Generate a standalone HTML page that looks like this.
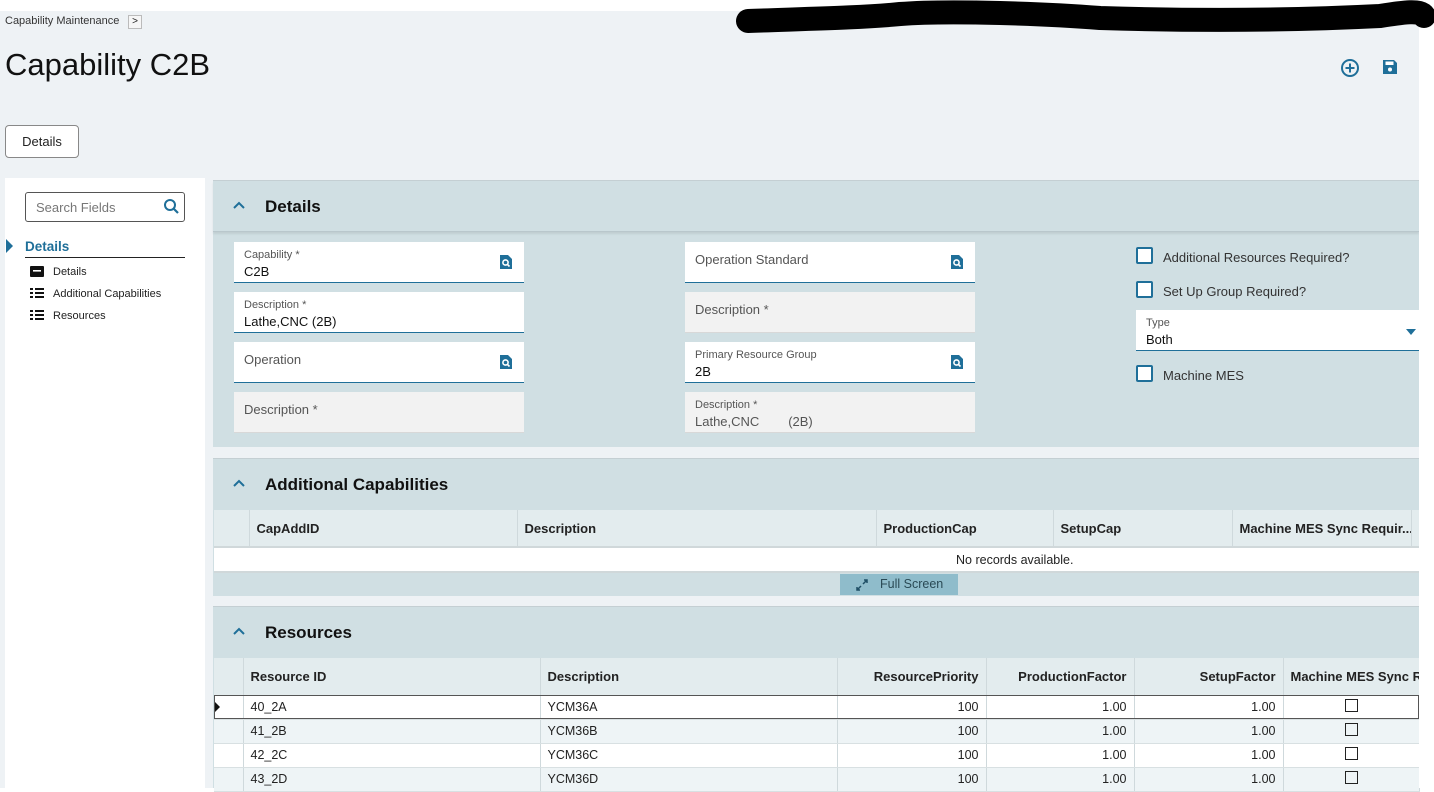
<!DOCTYPE html>
<html><head><meta charset="utf-8"><style>
*{box-sizing:border-box;margin:0;padding:0}
body{width:1434px;height:788px;overflow:hidden;background:#fff;font-family:"Liberation Sans",sans-serif;color:#222;position:relative}
.a{position:absolute}
.bg{left:0;top:11px;width:1419px;height:777px;background:#eef2f5}
.fld{position:absolute;background:#fff;border-bottom:1.5px solid #1f6f99;height:41px}
.fld.g{background:#f2f2f2;border-bottom:1px solid #d8d8d8}
.lbl{position:absolute;left:10px;top:7px;font-size:11px;color:#555}
.lbl.big{font-size:13px;top:10px}
.val{position:absolute;left:10px;top:22px;font-size:13px;color:#111}
.lk{position:absolute;right:12px;top:13px}
.sec{position:absolute;left:213px;width:1206px;background:#d0dfe3;border-top:1px solid #c4cfd3}
.sh{position:absolute;left:0;top:0;width:100%;height:51px;border-bottom:1px solid #b9c7cc;box-shadow:0 2px 2px rgba(0,0,0,.08)}
.st{position:absolute;left:52px;top:16px;font-size:17px;font-weight:bold;color:#111}
.chev{position:absolute;left:20px;top:20px}
.cb{position:absolute;width:17px;height:17px;border:2px solid #1f6f99;background:#fff;border-radius:2px}
.cbl{position:absolute;font-size:13px;color:#333}
table{border-collapse:collapse;position:absolute;table-layout:fixed}
th{background:#e3ecee;font-size:13px;text-align:left;font-weight:bold;height:37px;border-right:1px solid #cfd9dc;padding:0 7px;white-space:nowrap;overflow:hidden;color:#222}
td{font-size:12.5px;height:24px;border-right:1px solid #cfd9dc;border-bottom:1px solid #d8e0e2;padding:0 7px;white-space:nowrap}
.r{text-align:right}
.ck{display:inline-block;width:13px;height:13px;border:1.5px solid #222}
</style></head><body>
<div class="a bg"></div>
<div class="a" style="left:5px;top:15px;font-size:11px;color:#333">Capability Maintenance</div>
<div class="a" style="left:128px;top:15px;width:14px;height:14px;border:1px solid #bbb;background:#f6f6f6;font-size:10px;text-align:center;line-height:12px">&gt;</div>
<div class="a" style="left:5px;top:47px;font-size:31px;color:#111">Capability C2B</div>
<svg class="a" style="left:1340px;top:58px" width="20" height="20" viewBox="0 0 20 20"><circle cx="10" cy="10" r="8" fill="none" stroke="#1f6f99" stroke-width="2"/><path d="M10 5.5v9M5.5 10h9" stroke="#1f6f99" stroke-width="2"/></svg>
<svg class="a" style="left:1382px;top:59px" width="16" height="16" viewBox="0 0 16 16"><path d="M1 1h11l3 3v11H1z" fill="#1f6f99"/><rect x="3.5" y="2.5" width="8" height="3.5" fill="#fff"/><circle cx="8" cy="10.5" r="2" fill="#fff"/></svg>
<div class="a" style="left:5px;top:125px;width:74px;height:33px;border:1px solid #888;border-radius:4px;background:#fff;font-size:13px;text-align:center;line-height:31px">Details</div>

<div class="a" style="left:5px;top:178px;width:200px;height:610px;background:#fff"></div>
<div class="a" style="left:25px;top:192px;width:160px;height:30px;border:1px solid #555;border-radius:3px;background:#fff"><span class="a" style="left:10px;top:7px;font-size:13px;color:#777">Search Fields</span>
<svg class="a" style="left:137px;top:5px" width="17" height="17" viewBox="0 0 17 17"><circle cx="7" cy="7" r="5" fill="none" stroke="#1f6f99" stroke-width="2"/><path d="M10.5 10.5L15 15" stroke="#1f6f99" stroke-width="2.2"/></svg></div>
<svg class="a" style="left:6px;top:239px" width="7" height="14"><path d="M0 0L7 7L0 14z" fill="#1f6f99"/></svg>
<div class="a" style="left:25px;top:239px;font-size:13.5px;font-weight:bold;color:#1f6f99">Details</div>
<div class="a" style="left:25px;top:257px;width:160px;border-top:1px solid #222"></div>
<svg class="a" style="left:30px;top:266px" width="14" height="11"><rect width="14" height="11" rx="1" fill="#111"/><rect x="3" y="4" width="8" height="1.6" fill="#fff"/></svg>
<div class="a" style="left:53px;top:266px;font-size:11px">Details</div>
<svg class="a" style="left:30px;top:288px" width="14" height="11"><path d="M0 1h3M0 5h3M0 9h3M5 1h9M5 5h9M5 9h9" stroke="#111" stroke-width="2"/></svg>
<div class="a" style="left:53px;top:288px;font-size:11px">Additional Capabilities</div>
<svg class="a" style="left:30px;top:310px" width="14" height="11"><path d="M0 1h3M0 5h3M0 9h3M5 1h9M5 5h9M5 9h9" stroke="#111" stroke-width="2"/></svg>
<div class="a" style="left:53px;top:310px;font-size:11px">Resources</div>

<div class="sec" style="top:180px;height:267px">
<div class="sh"><svg class="chev" width="12" height="8"><path d="M1 7L6 2L11 7" stroke="#1f6f99" stroke-width="2" fill="none"/></svg><div class="st">Details</div></div>
</div>
<div class="fld" style="left:234px;top:242px;width:290px"><div class="lbl">Capability *</div><div class="val">C2B</div><svg class="lk" width="12" height="14" viewBox="0 0 12 14"><path d="M0 0h8l4 4v10H0z" fill="#1f6f99"/><circle cx="5.5" cy="7.5" r="2.6" fill="none" stroke="#fff" stroke-width="1.6"/><path d="M7.5 9.5l2 2" stroke="#fff" stroke-width="1.6"/></svg></div>
<div class="fld" style="left:234px;top:292px;width:290px"><div class="lbl">Description *</div><div class="val">Lathe,CNC (2B)</div></div>
<div class="fld" style="left:234px;top:342px;width:290px"><div class="lbl big">Operation</div><svg class="lk" width="12" height="14" viewBox="0 0 12 14"><path d="M0 0h8l4 4v10H0z" fill="#1f6f99"/><circle cx="5.5" cy="7.5" r="2.6" fill="none" stroke="#fff" stroke-width="1.6"/><path d="M7.5 9.5l2 2" stroke="#fff" stroke-width="1.6"/></svg></div>
<div class="fld g" style="left:234px;top:392px;width:290px"><div class="lbl big">Description *</div></div>
<div class="fld" style="left:685px;top:242px;width:290px"><div class="lbl big">Operation Standard</div><svg class="lk" width="12" height="14" viewBox="0 0 12 14"><path d="M0 0h8l4 4v10H0z" fill="#1f6f99"/><circle cx="5.5" cy="7.5" r="2.6" fill="none" stroke="#fff" stroke-width="1.6"/><path d="M7.5 9.5l2 2" stroke="#fff" stroke-width="1.6"/></svg></div>
<div class="fld g" style="left:685px;top:292px;width:290px"><div class="lbl big">Description *</div></div>
<div class="fld" style="left:685px;top:342px;width:290px"><div class="lbl">Primary Resource Group</div><div class="val">2B</div><svg class="lk" width="12" height="14" viewBox="0 0 12 14"><path d="M0 0h8l4 4v10H0z" fill="#1f6f99"/><circle cx="5.5" cy="7.5" r="2.6" fill="none" stroke="#fff" stroke-width="1.6"/><path d="M7.5 9.5l2 2" stroke="#fff" stroke-width="1.6"/></svg></div>
<div class="fld g" style="left:685px;top:392px;width:290px"><div class="lbl">Description *</div><div class="val" style="color:#555">Lathe,CNC &nbsp; &nbsp; &nbsp; &nbsp;(2B)</div></div>
<div class="cb" style="left:1136px;top:247px"></div><div class="cbl" style="left:1163px;top:250px">Additional Resources Required?</div>
<div class="cb" style="left:1136px;top:281px"></div><div class="cbl" style="left:1163px;top:284px">Set Up Group Required?</div>
<div class="fld" style="left:1136px;top:310px;width:283px"><div class="lbl">Type</div><div class="val">Both</div><svg class="a" style="right:3px;top:19px" width="10" height="6"><path d="M0 0h10L5 6z" fill="#1f6f99"/></svg></div>
<div class="cb" style="left:1136px;top:365px"></div><div class="cbl" style="left:1163px;top:368px">Machine MES</div>

<div class="sec" style="top:458px;height:138px">
<div class="sh" style="box-shadow:none;border-bottom:none"><svg class="chev" width="12" height="8"><path d="M1 7L6 2L11 7" stroke="#1f6f99" stroke-width="2" fill="none"/></svg><div class="st">Additional Capabilities</div></div>
</div>
<table style="left:214px;top:510px;width:1205px">
<colgroup><col style="width:35px"><col style="width:268px"><col style="width:359px"><col style="width:177px"><col style="width:179px"><col style="width:179px"><col style="width:8px"></colgroup>
<tr><th></th><th>CapAddID</th><th>Description</th><th>ProductionCap</th><th>SetupCap</th><th>Machine MES Sync Requir...</th><th></th></tr>
<tr><td colspan="7" style="background:#fff;border-top:2px solid #d0d8da;border-bottom:2px solid #d0d8da;height:25px;padding-left:742px;text-align:left">No records available.</td></tr>
</table>
<div class="a" style="left:840px;top:574px;width:118px;height:21px;background:#8fbccb;font-size:12.5px;color:#2a4a55">
<svg class="a" style="left:16px;top:5px" width="12" height="12"><path d="M7 5L11 1M8 1h3v3M5 7L1 11M1 8v3h3" stroke="#1f4f66" stroke-width="1.5" fill="none"/></svg>
<span class="a" style="left:40px;top:3px">Full Screen</span></div>

<div class="sec" style="top:606px;height:182px">
<div class="sh" style="box-shadow:none;border-bottom:none"><svg class="chev" width="12" height="8"><path d="M1 7L6 2L11 7" stroke="#1f6f99" stroke-width="2" fill="none"/></svg><div class="st">Resources</div></div>
</div>
<table style="left:214px;top:658px;width:1205px">
<colgroup><col style="width:29px"><col style="width:297px"><col style="width:297px"><col style="width:149px"><col style="width:148px"><col style="width:149px"><col style="width:136px"></colgroup>
<tr><th></th><th>Resource ID</th><th>Description</th><th class="r">ResourcePriority</th><th class="r">ProductionFactor</th><th class="r">SetupFactor</th><th>Machine MES Sync R...</th></tr>
<tr style="background:#fff;outline:1.5px solid #555;outline-offset:-1px"><td style="border-top:1.5px solid #555;padding:0"><svg width="6" height="12" style="display:block"><path d="M0 0L6 6L0 12z" fill="#111"/></svg></td><td>40_2A</td><td>YCM36A</td><td class="r">100</td><td class="r">1.00</td><td class="r">1.00</td><td style="text-align:center"><span class="ck"></span></td></tr>
<tr style="background:#eef4f6"><td></td><td>41_2B</td><td>YCM36B</td><td class="r">100</td><td class="r">1.00</td><td class="r">1.00</td><td style="text-align:center"><span class="ck"></span></td></tr>
<tr style="background:#fff"><td></td><td>42_2C</td><td>YCM36C</td><td class="r">100</td><td class="r">1.00</td><td class="r">1.00</td><td style="text-align:center"><span class="ck"></span></td></tr>
<tr style="background:#eef4f6"><td></td><td>43_2D</td><td>YCM36D</td><td class="r">100</td><td class="r">1.00</td><td class="r">1.00</td><td style="text-align:center"><span class="ck"></span></td></tr>
</table>
<div class="a" style="left:1419px;top:0;width:15px;height:788px;background:#fff"></div>
<svg class="a" style="left:0;top:0" width="1434" height="40"><path d="M748,21 C800,19 860,18 900,14 C950,10 1050,14 1100,18 C1200,21 1300,20 1380,16 C1405,12 1420,10 1424,16" stroke="#000" stroke-width="24" fill="none" stroke-linecap="round"/></svg>
</body></html>
